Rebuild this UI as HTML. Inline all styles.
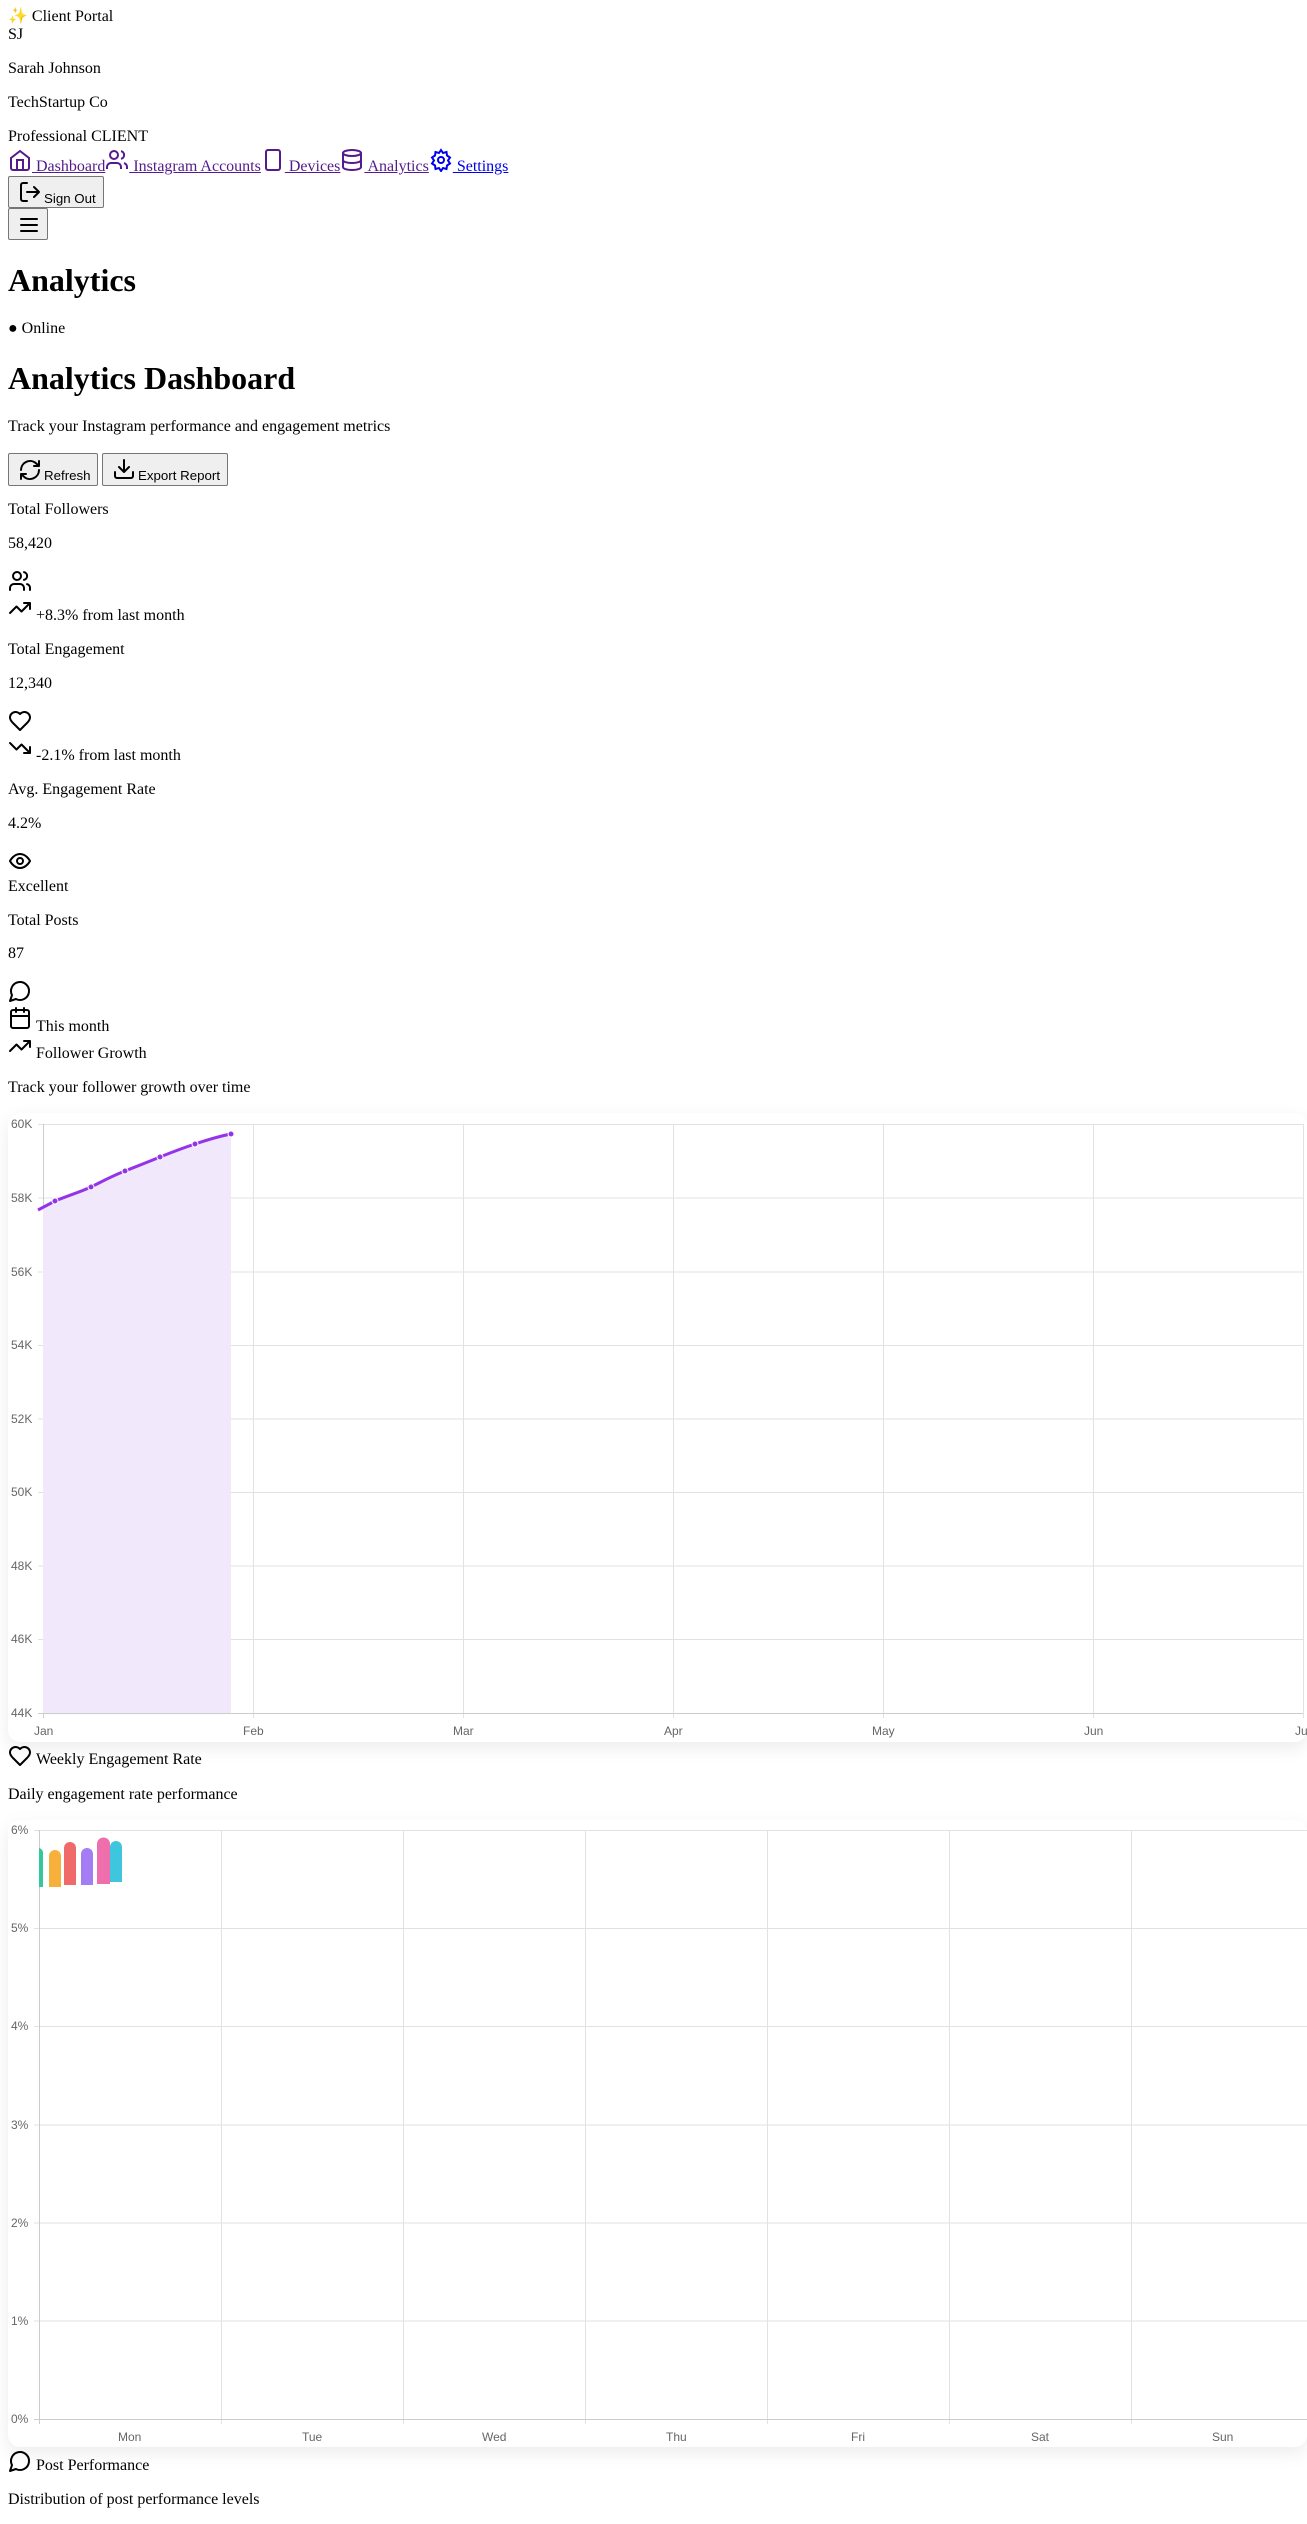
<!DOCTYPE html>
<html><head><meta charset="utf-8"><style>
*{box-sizing:border-box}
body{margin:0;width:1307px;height:2524px;position:relative;background:#fff;font-family:"Liberation Serif",serif;font-size:16px;color:#000;overflow:hidden}
.t{position:absolute;left:8px;line-height:18px;white-space:nowrap}
.ic{position:absolute;fill:none;stroke:#000;stroke-width:2;stroke-linecap:round;stroke-linejoin:round}
a{color:#551A8B}
.btn{position:absolute;background:#efefef;border:1px solid #767676;border-radius:2px;font-family:"Liberation Sans",sans-serif;font-size:13.3px}
.lab{position:absolute;font-family:"Liberation Sans",sans-serif;font-size:12px;color:#666;line-height:14px}
.card{position:absolute;left:8px;right:0;background:#fff;border-radius:12px;box-shadow:0 6px 18px rgba(0,0,0,.08)}
.nav svg{vertical-align:-1px}
</style></head><body>
<div class="t" style="top:8px">✨ Client Portal</div>
<div class="t" style="top:26px">SJ</div>
<div class="t" style="top:60px">Sarah Johnson</div>
<div class="t" style="top:94px">TechStartup Co</div>
<div class="t" style="top:128px">Professional CLIENT</div>
<div class="t nav" style="top:148px;height:28px;line-height:18px;left:8px">
<svg width="24" height="24" viewBox="0 0 24 24" style="fill:none;stroke:#551A8B;stroke-width:2"><path d="M3 10l9-7 9 7v10a2 2 0 0 1-2 2H5a2 2 0 0 1-2-2z"/><path d="M9 22V12h6v10"/></svg><a href="#"> Dashboard</a><svg width="24" height="24" viewBox="0 0 24 24" style="fill:none;stroke:#551A8B;stroke-width:2"><path d="M16 21v-2a4 4 0 0 0-4-4H6a4 4 0 0 0-4 4v2"/><circle cx="9" cy="7" r="4"/><path d="M22 21v-2a4 4 0 0 0-3-3.9M16 3.1a4 4 0 0 1 0 7.8"/></svg><a href="#"> Instagram Accounts</a><svg width="24" height="24" viewBox="0 0 24 24" style="fill:none;stroke:#551A8B;stroke-width:2"><rect x="5" y="2" width="14" height="20" rx="2"/><path d="M12 18h.01"/></svg><a href="#"> Devices</a><svg width="24" height="24" viewBox="0 0 24 24" style="fill:none;stroke:#551A8B;stroke-width:2"><ellipse cx="12" cy="5" rx="9" ry="3"/><path d="M3 5v14c0 1.7 4 3 9 3s9-1.3 9-3V5M3 12c0 1.7 4 3 9 3s9-1.3 9-3"/></svg><a href="#"> Analytics</a><svg width="24" height="24" viewBox="0 0 24 24" style="fill:none;stroke:#00e;stroke-width:2"><circle cx="12" cy="12" r="3"/><path d="M12 2l2 3 3.5-1 .5 3.5 3 2-2 3 2 3-3 2-.5 3.5-3.5-1-2 3-2-3-3.5 1-.5-3.5-3-2 2-3-2-3 3-2 .5-3.5 3.5 1z"/></svg><a href="#" style="color:#00e"> Settings</a></div>
<div class="btn" style="left:8px;top:176px;width:96px;height:32px"><svg class="ic" style="left:9px;top:3px" width="24" height="24" viewBox="0 0 24 24"><path d="M9 21H5a2 2 0 0 1-2-2V5a2 2 0 0 1 2-2h4M16 17l5-5-5-5M21 12H9"/></svg><span style="position:absolute;left:35px;top:14px">Sign Out</span></div>
<div class="btn" style="left:8px;top:208px;width:40px;height:32px"><svg class="ic" style="left:8px;top:4px" width="24" height="24" viewBox="0 0 24 24"><path d="M4 6h16M4 12h16M4 18h16"/></svg></div>
<div class="t" style="top:261px;font-size:32px;font-weight:bold;line-height:38px">Analytics</div>
<div class="t" style="top:320px">● Online</div>
<div class="t" style="top:359px;font-size:32px;font-weight:bold;line-height:38px">Analytics Dashboard</div>
<div class="t" style="top:418px">Track your Instagram performance and engagement metrics</div>
<div class="btn" style="left:8px;top:453px;width:90px;height:33px"><svg class="ic" style="left:9px;top:4px" width="24" height="24" viewBox="0 0 24 24"><path d="M3 12a9 9 0 0 1 15-6.7L21 8M21 3v5h-5M21 12a9 9 0 0 1-15 6.7L3 16M3 21v-5h5"/></svg><span style="position:absolute;left:35px;top:14px">Refresh</span></div>
<div class="btn" style="left:102px;top:453px;width:126px;height:33px"><svg class="ic" style="left:9px;top:3px" width="24" height="24" viewBox="0 0 24 24"><path d="M21 15v4a2 2 0 0 1-2 2H5a2 2 0 0 1-2-2v-4M7 10l5 5 5-5M12 15V3"/></svg><span style="position:absolute;left:35px;top:14px">Export Report</span></div>

<div class="t" style="top:501px">Total Followers</div>
<div class="t" style="top:535px">58,420</div>
<svg class="ic" style="left:8px;top:569px" width="24" height="24" viewBox="0 0 24 24"><path d="M16 21v-2a4 4 0 0 0-4-4H6a4 4 0 0 0-4 4v2"/><circle cx="9" cy="7" r="4"/><path d="M22 21v-2a4 4 0 0 0-3-3.9M16 3.1a4 4 0 0 1 0 7.8"/></svg>
<svg class="ic" style="left:8px;top:596px" width="24" height="24" viewBox="0 0 24 24"><path d="M22 7l-8.5 8.5-5-5L2 17M16 7h6v6"/></svg>
<div class="t" style="top:607px;left:36px">+8.3% from last month</div>
<div class="t" style="top:641px">Total Engagement</div>
<div class="t" style="top:675px">12,340</div>
<svg class="ic" style="left:8px;top:709px" width="24" height="24" viewBox="0 0 24 24"><path d="M19 14c1.5-1.5 3-3.2 3-5.5A5.5 5.5 0 0 0 16.5 3c-1.8 0-3 .5-4.5 2-1.5-1.5-2.7-2-4.5-2A5.5 5.5 0 0 0 2 8.5c0 2.3 1.5 4 3 5.5l7 7z"/></svg>
<svg class="ic" style="left:8px;top:736px" width="24" height="24" viewBox="0 0 24 24"><path d="M22 17l-8.5-8.5-5 5L2 7M16 17h6v-6"/></svg>
<div class="t" style="top:747px;left:36px">-2.1% from last month</div>
<div class="t" style="top:781px">Avg. Engagement Rate</div>
<div class="t" style="top:815px">4.2%</div>
<svg class="ic" style="left:8px;top:849px" width="24" height="24" viewBox="0 0 24 24"><path d="M2 12s3.5-7 10-7 10 7 10 7-3.5 7-10 7S2 12 2 12z"/><circle cx="12" cy="12" r="3"/></svg>
<div class="t" style="top:878px">Excellent</div>
<div class="t" style="top:912px">Total Posts</div>
<div class="t" style="top:945px">87</div>
<svg class="ic" style="left:8px;top:979px" width="24" height="24" viewBox="0 0 24 24"><path d="M7.9 20A9 9 0 1 0 4 16.1L2 22z"/></svg>
<svg class="ic" style="left:8px;top:1006px" width="24" height="24" viewBox="0 0 24 24"><rect x="3" y="4" width="18" height="18" rx="2"/><path d="M16 2v4M8 2v4M3 10h18"/></svg>
<div class="t" style="top:1018px;left:36px">This month</div>
<svg class="ic" style="left:8px;top:1034px" width="24" height="24" viewBox="0 0 24 24"><path d="M22 7l-8.5 8.5-5-5L2 17M16 7h6v6"/></svg>
<div class="t" style="top:1045px;left:36px">Follower Growth</div>
<div class="t" style="top:1079px">Track your follower growth over time</div>

<div class="card" style="top:1113px;height:629px"></div>
<svg style="position:absolute;left:0;top:0" width="1307" height="1760">
<g stroke="#e2e2e2" stroke-width="1">
<line x1="38" x2="1303" y1="1124.5" y2="1124.5"/><line x1="38" x2="1303" y1="1198" y2="1198"/><line x1="38" x2="1303" y1="1272" y2="1272"/><line x1="38" x2="1303" y1="1345.5" y2="1345.5"/><line x1="38" x2="1303" y1="1419" y2="1419"/><line x1="38" x2="1303" y1="1492.5" y2="1492.5"/><line x1="38" x2="1303" y1="1566" y2="1566"/><line x1="38" x2="1303" y1="1639.5" y2="1639.5"/>
<line x1="253.5" x2="253.5" y1="1124" y2="1718"/><line x1="463.5" x2="463.5" y1="1124" y2="1718"/><line x1="673.5" x2="673.5" y1="1124" y2="1718"/><line x1="883.5" x2="883.5" y1="1124" y2="1718"/><line x1="1093.5" x2="1093.5" y1="1124" y2="1718"/><line x1="1303.5" x2="1303.5" y1="1124" y2="1718"/>
</g>
<line x1="43.5" x2="43.5" y1="1124" y2="1718" stroke="#ccc"/><line x1="38" x2="1303" y1="1713.5" y2="1713.5" stroke="#ccc"/>
<path d="M43 1208 L55 1201 C70 1195 80 1192 91 1187 C105 1180 112 1176 125 1171 C140 1165 148 1162 160 1157 C175 1151 183 1148 195 1144 C210 1139 220 1136 231 1134 L231 1713 L43 1713Z" fill="#f1e8fc"/>
<path d="M38 1210 L55 1201 C70 1195 80 1192 91 1187 C105 1180 112 1176 125 1171 C140 1165 148 1162 160 1157 C175 1151 183 1148 195 1144 C210 1139 220 1136 231 1134" fill="none" stroke="#9333ea" stroke-width="3"/>
<g fill="#9333ea" stroke="#fff" stroke-width="1"><circle cx="55" cy="1201" r="3"/><circle cx="91" cy="1187" r="3"/><circle cx="125" cy="1171" r="3"/><circle cx="160" cy="1157" r="3"/><circle cx="195" cy="1144" r="3"/><circle cx="231" cy="1134" r="3"/></g>
</svg>
<div class="lab" style="left:11px;top:1117px">60K</div><div class="lab" style="left:11px;top:1191px">58K</div><div class="lab" style="left:11px;top:1265px">56K</div><div class="lab" style="left:11px;top:1338px">54K</div><div class="lab" style="left:11px;top:1412px">52K</div><div class="lab" style="left:11px;top:1485px">50K</div><div class="lab" style="left:11px;top:1559px">48K</div><div class="lab" style="left:11px;top:1632px">46K</div><div class="lab" style="left:11px;top:1706px">44K</div>
<div class="lab" style="left:34px;top:1724px">Jan</div><div class="lab" style="left:243px;top:1724px">Feb</div><div class="lab" style="left:453px;top:1724px">Mar</div><div class="lab" style="left:664px;top:1724px">Apr</div><div class="lab" style="left:872px;top:1724px">May</div><div class="lab" style="left:1084px;top:1724px">Jun</div><div class="lab" style="left:1295px;top:1724px">Jul</div>

<svg class="ic" style="left:8px;top:1744px" width="24" height="24" viewBox="0 0 24 24"><path d="M19 14c1.5-1.5 3-3.2 3-5.5A5.5 5.5 0 0 0 16.5 3c-1.8 0-3 .5-4.5 2-1.5-1.5-2.7-2-4.5-2A5.5 5.5 0 0 0 2 8.5c0 2.3 1.5 4 3 5.5l7 7z"/></svg>
<div class="t" style="top:1751px;left:36px">Weekly Engagement Rate</div>
<div class="t" style="top:1786px">Daily engagement rate performance</div>

<div class="card" style="top:1820px;height:627px"></div>
<svg style="position:absolute;left:0;top:0" width="1307" height="2450">
<g stroke="#e2e2e2"><line x1="34" x2="1307" y1="1830.5" y2="1830.5"/><line x1="34" x2="1307" y1="1928.5" y2="1928.5"/><line x1="34" x2="1307" y1="2026.5" y2="2026.5"/><line x1="34" x2="1307" y1="2125" y2="2125"/><line x1="34" x2="1307" y1="2223" y2="2223"/><line x1="34" x2="1307" y1="2321" y2="2321"/>
<line x1="221.5" x2="221.5" y1="1830" y2="2424"/><line x1="403.5" x2="403.5" y1="1830" y2="2424"/><line x1="585.5" x2="585.5" y1="1830" y2="2424"/><line x1="767.5" x2="767.5" y1="1830" y2="2424"/><line x1="949.5" x2="949.5" y1="1830" y2="2424"/><line x1="1131.5" x2="1131.5" y1="1830" y2="2424"/></g>
<line x1="39.5" x2="39.5" y1="1830" y2="2424" stroke="#ccc"/><line x1="34" x2="1307" y1="2419.5" y2="2419.5" stroke="#ccc"/>
<path d="M39 1848a5 5 0 0 1 4 5v34h-4z" fill="#34c79a"/>
<path d="M49 1887v-31a6 6 0 0 1 12 0v31z" fill="#f8b03c"/>
<path d="M64 1885v-37a6 6 0 0 1 12 0v37z" fill="#f06a6a"/>
<path d="M81 1885v-31a6 6 0 0 1 12 0v31z" fill="#a47cf3"/>
<path d="M97 1884v-40a6.5 6.5 0 0 1 13 0v40z" fill="#ef6eac"/>
<path d="M110 1882v-35a6 6 0 0 1 12 0v35z" fill="#3ec6de"/>
</svg>
<div class="lab" style="left:11px;top:1823px">6%</div><div class="lab" style="left:11px;top:1921px">5%</div><div class="lab" style="left:11px;top:2019px">4%</div><div class="lab" style="left:11px;top:2118px">3%</div><div class="lab" style="left:11px;top:2216px">2%</div><div class="lab" style="left:11px;top:2314px">1%</div><div class="lab" style="left:11px;top:2412px">0%</div>
<div class="lab" style="left:118px;top:2430px">Mon</div><div class="lab" style="left:302px;top:2430px">Tue</div><div class="lab" style="left:482px;top:2430px">Wed</div><div class="lab" style="left:666px;top:2430px">Thu</div><div class="lab" style="left:851px;top:2430px">Fri</div><div class="lab" style="left:1031px;top:2430px">Sat</div><div class="lab" style="left:1212px;top:2430px">Sun</div>

<svg class="ic" style="left:8px;top:2449px" width="24" height="24" viewBox="0 0 24 24"><path d="M7.9 20A9 9 0 1 0 4 16.1L2 22z"/></svg>
<div class="t" style="top:2457px;left:36px">Post Performance</div>
<div class="t" style="top:2491px">Distribution of post performance levels</div>
</body></html>
